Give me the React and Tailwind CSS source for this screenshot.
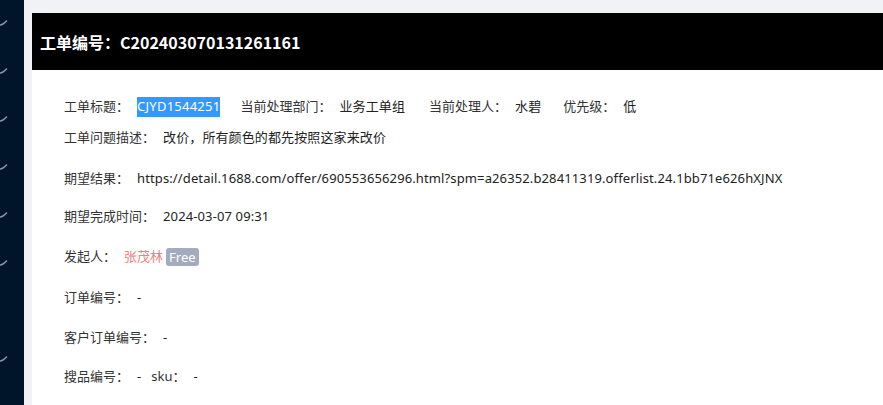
import React from "react";

const font = { fontFamily: '"Microsoft YaHei", "Noto Sans CJK SC", "Noto Sans", sans-serif' };
const bodyFont = { fontFamily: '"Noto Sans", "Noto Sans CJK SC", sans-serif' };

function MenuMark() {
  return (
    <svg width="8" height="6" viewBox="0 0 8 6" className="block">
      <path d="M0.5 5 L3 4 L6.5 1" stroke="#8a94a6" strokeWidth="1.6" fill="none" strokeLinecap="round" />
    </svg>
  );
}

function Field({ label, children, className = "" }) {
  return (
    <div className={"flex items-center " + className}>
      <span className="text-[#333]">{label}</span>
      <span className="ml-2 tracking-[0.12px] text-[#222]">{children}</span>
    </div>
  );
}

export default function App() {
  const marks = [20, 68, 116, 164, 212, 260, 356];

  return (
    <div className="flex h-[405px] w-[883px] overflow-hidden bg-[#f0f2f5]" style={font}>
      {/* collapsed side menu */}
      <aside className="relative h-full w-[24px] shrink-0 bg-[#001529]">
        {marks.map((top) => (
          <div key={top} className="absolute left-0" style={{ top }}>
            <MenuMark />
          </div>
        ))}
      </aside>

      <main className="ml-2 mt-[13px] flex flex-1 flex-col bg-white">
        <div className="flex h-[57px] items-center bg-black pl-2 text-[16px] font-bold text-white">
          工单编号：C202403070131261161
        </div>

        <div className="flex flex-col px-8 pt-[26px] text-[13px]" style={bodyFont}>
          <div className="flex h-[22px] items-center">
            <div className="mr-[20px] flex items-center">
              <span className="text-[#333]">工单标题：</span>
              <span className="ml-2 flex h-[20px] items-center bg-[#3399ff] tracking-[0.25px] text-white">CJYD1544251</span>
            </div>
            <Field label="当前处理部门：" className="mr-[24px]">业务工单组</Field>
            <Field label="当前处理人：" className="mr-[22px]">水碧</Field>
            <Field label="优先级：">低</Field>
          </div>

          <div className="mt-[9px] flex h-[22px] items-center">
            <Field label="工单问题描述：">改价，所有颜色的都先按照这家来改价</Field>
          </div>

          <div className="mt-[19px] flex h-[22px] items-center">
            <Field label="期望结果：">
              https://detail.1688.com/offer/690553656296.html?spm=a26352.b28411319.offerlist.24.1bb71e626hXJNX
            </Field>
          </div>

          <div className="mt-[16px] flex h-[22px] items-center">
            <Field label="期望完成时间：">2024-03-07 09:31</Field>
          </div>

          <div className="mt-[18px] flex h-[22px] items-center">
            <span className="text-[#333]">发起人：</span>
            <span className="ml-2 text-[#f08080]">张茂林</span>
            <span className="ml-[3px] rounded-[3px] bg-[#a3abbe] px-[3px] leading-[18px] text-white">Free</span>
          </div>

          <div className="mt-[19px] flex h-[22px] items-center">
            <Field label="订单编号：">-</Field>
          </div>

          <div className="mt-[18px] flex h-[22px] items-center">
            <Field label="客户订单编号：">-</Field>
          </div>

          <div className="mt-[17px] flex h-[22px] items-center">
            <Field label="搜品编号：" className="mr-[10px]">-</Field>
            <Field label="sku：">-</Field>
          </div>
        </div>
      </main>
    </div>
  );
}
